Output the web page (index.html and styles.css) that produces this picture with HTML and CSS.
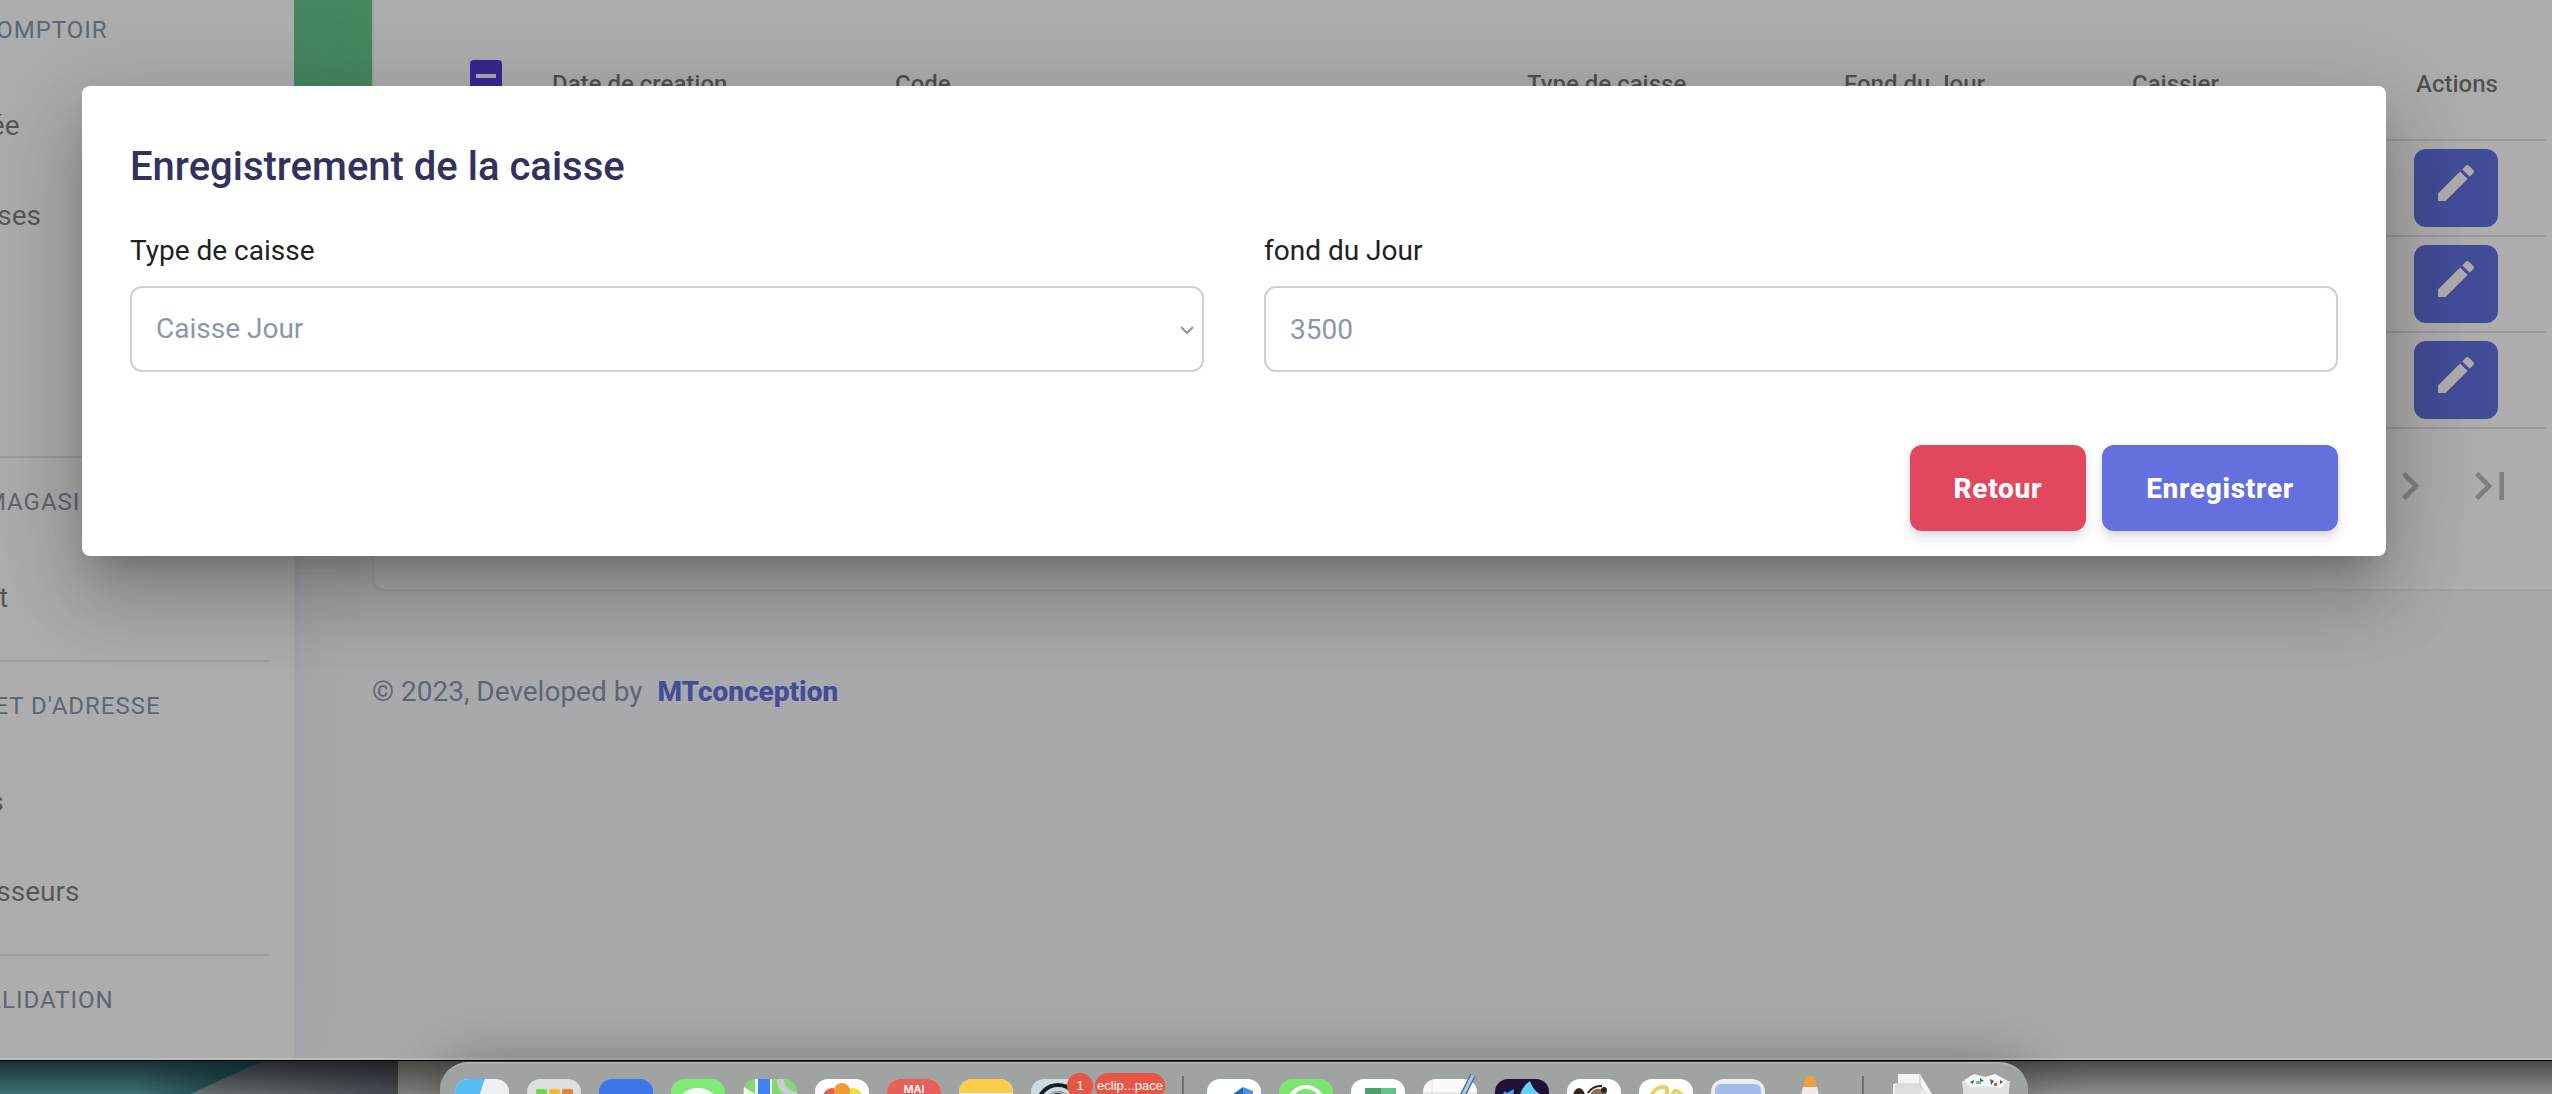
FILE: index.html
```
<!DOCTYPE html>
<html lang="fr">
<head>
    <meta charset="UTF-8">
    <title>Enregistrement de la caisse</title>
    <link rel="stylesheet" href="styles.css">
</head>
<body>
    <div class="page">
        <nav class="sidebar">
            <div class="group">
                <h6>Ventes et comptoir</h6>
                <a href="#">Journée</a>
                <a href="#">Dépenses</a>
                <a href="#">Vente</a>
                <a href="#">Stock</a>
            </div>
            <div class="group">
                <h6>Stocks du magasin</h6>
                <a href="#">Produit</a>
            </div>
            <div class="group">
                <h6>Personnes et d'adresse</h6>
                <a href="#">Clients</a>
                <a href="#">Fournisseurs</a>
            </div>
            <div class="group">
                <h6>Gestions validation</h6>
            </div>
        </nav>

        <main class="main">
            <div class="header"></div>
            <div class="card">
                <table class="list">
                    <colgroup>
                        <col class="c-check"><col class="c-date"><col><col class="c-type"><col class="c-fond"><col class="c-user"><col class="c-act">
                    </colgroup>
                    <thead>
                        <tr>
                            <th class="check"><input type="checkbox" aria-label="Tout"></th>
                            <th>Date de creation</th>
                            <th>Code</th>
                            <th>Type de caisse</th>
                            <th>Fond du Jour</th>
                            <th>Caissier</th>
                            <th>Actions</th>
                        </tr>
                    </thead>
                    <tbody>
                        <tr>
                            <td></td><td></td><td></td><td></td><td></td><td></td>
                            <td><button class="edit" aria-label="Modifier"><svg viewBox="0 0 24 24"><use href="#pencil"/></svg></button></td>
                        </tr>
                        <tr>
                            <td></td><td></td><td></td><td></td><td></td><td></td>
                            <td><button class="edit" aria-label="Modifier"><svg viewBox="0 0 24 24"><use href="#pencil"/></svg></button></td>
                        </tr>
                        <tr>
                            <td></td><td></td><td></td><td></td><td></td><td></td>
                            <td><button class="edit" aria-label="Modifier"><svg viewBox="0 0 24 24"><use href="#pencil"/></svg></button></td>
                        </tr>
                    </tbody>
                </table>
                <div class="paginator">
                    <button aria-label="Page suivante"><svg viewBox="0 0 24 24"><path d="M10 6L8.59 7.41 13.17 12l-4.58 4.59L10 18l6-6z"/></svg></button>
                    <button aria-label="Dernière page"><svg viewBox="0 0 24 24"><path d="M5.59 7.41L10.18 12l-4.59 4.59L7 18l6-6-6-6zM16 6h2v12h-2z"/></svg></button>
                </div>
            </div>
            <footer class="footer">© 2023, Developed by <a href="#">MTconception</a></footer>
        </main>

        <div class="overlay">
            <form class="dialog" role="dialog">
                <h2>Enregistrement de la caisse</h2>
                <div class="fields">
                    <div class="field">
                        <label for="type">Type de caisse</label>
                        <div class="select">
                            <select id="type"><option>Caisse Jour</option></select>
                            <svg viewBox="0 0 16 10"><path d="M2 2l6 6 6-6"/></svg>
                        </div>
                    </div>
                    <div class="field">
                        <label for="fond">fond du Jour</label>
                        <input type="text" id="fond" value="3500">
                    </div>
                </div>
                <div class="actions">
                    <button type="button" class="btn danger">Retour</button>
                    <button type="button" class="btn primary">Enregistrer</button>
                </div>
            </form>
        </div>
    </div>

    <div class="desktop">
        <svg class="wallpaper" width="440" height="34" viewBox="0 0 440 34">
            <defs>
                <linearGradient id="teal" x1="0" y1="0" x2="0" y2="1"><stop offset="0" stop-color="#1c2f31"/><stop offset="1" stop-color="#3d6f74"/></linearGradient>
                <linearGradient id="tealShade" x1="0" y1="0" x2="1" y2="0"><stop offset=".5" stop-color="#07282c" stop-opacity="0"/><stop offset="1" stop-color="#07282c" stop-opacity=".8"/></linearGradient>
                <linearGradient id="slate" x1="0" y1="0" x2="0" y2="1"><stop offset="0" stop-color="#26292c"/><stop offset="1" stop-color="#676d71"/></linearGradient>
                <linearGradient id="slateShade" x1="0" y1="0" x2="1" y2="0"><stop offset=".5" stop-color="#10141c" stop-opacity="0"/><stop offset="1" stop-color="#10141c" stop-opacity=".4"/></linearGradient>
                <linearGradient id="warm" x1="0" y1="0" x2="0" y2="1"><stop offset="0" stop-color="#474744"/><stop offset="1" stop-color="#82807c"/></linearGradient>
            </defs>
            <rect width="398" height="34" fill="url(#slate)"/>
            <rect width="398" height="34" fill="url(#slateShade)"/>
            <path d="M0 0H265L190 34H0z" fill="url(#teal)"/>
            <path d="M0 0H265L190 34H0z" fill="url(#tealShade)"/>
            <rect x="398" width="42" height="34" fill="url(#warm)"/>
        </svg>
        <div class="dock">
            <!-- finder -->
            <svg viewBox="0 0 54 54"><rect width="54" height="54" rx="13" fill="#eef0f3"/><path d="M13 0H30Q24 14 22 30H0V13A13 13 0 0 1 13 0z" fill="#55bdf5"/><path d="M14 16v8M40 16v8" stroke="#222" stroke-width="2"/></svg>
            <!-- launchpad -->
            <svg viewBox="0 0 54 54"><rect width="54" height="54" rx="13" fill="#dcdfe0"/><rect x="9" y="10" width="11" height="11" rx="2" fill="#69d94b"/><rect x="22" y="10" width="11" height="11" rx="2" fill="#f5b93a"/><rect x="35" y="10" width="11" height="11" rx="2" fill="#e58435"/></svg>
            <!-- mail -->
            <svg viewBox="0 0 54 54"><rect width="54" height="54" rx="13" fill="#3b76ea"/><rect x="8" y="15" width="38" height="26" rx="3" fill="#f3f6fb"/></svg>
            <!-- messages -->
            <svg viewBox="0 0 54 54"><rect width="54" height="54" rx="13" fill="#7fea78"/><ellipse cx="27" cy="25" rx="20" ry="16" fill="#f7fbf7"/></svg>
            <!-- maps -->
            <svg viewBox="0 0 54 54"><rect width="54" height="54" rx="13" fill="#83d876"/><path d="M1 8L12 15V30H0z" fill="#f6f8f6"/><path d="M12 0H29V30H12z" fill="#f2f4f5"/><path d="M15 0H27V30H15z" fill="#3f83f2"/><path d="M37 0Q38 14 54 17" fill="none" stroke="#c9ccd4" stroke-width="7"/></svg>
            <!-- photos -->
            <svg viewBox="0 0 54 54"><rect width="54" height="54" rx="13" fill="#fdfdfd"/><circle cx="17" cy="18" r="9" fill="#e9604f"/><circle cx="38" cy="18" r="9" fill="#f1df3e"/><circle cx="27" cy="12" r="8" fill="#f09a38"/></svg>
            <!-- calendar -->
            <svg viewBox="0 0 54 54"><rect width="54" height="54" rx="13" fill="#f4f4f4"/><path d="M0 17V13A13 13 0 0 1 13 0H41A13 13 0 0 1 54 13V17z" fill="#e6615a"/><text x="27" y="14" text-anchor="middle">MAI</text></svg>
            <!-- notes -->
            <svg viewBox="0 0 54 54"><rect width="54" height="54" rx="13" fill="#efeeec"/><path d="M0 14V13A13 13 0 0 1 13 0H41A13 13 0 0 1 54 13V14z" fill="#f8ce4b"/></svg>
            <!-- settings -->
            <div class="app">
                <svg viewBox="0 0 54 54"><rect width="54" height="54" rx="13" fill="#cddae0"/><circle cx="27" cy="26" r="20" fill="none" stroke="#1c1f21" stroke-width="4"/><circle cx="27" cy="26" r="14" fill="#3b3f42"/><path d="M16 18Q26 8 38 18" fill="none" stroke="#aab2b6" stroke-width="2"/></svg>
                <span class="badge">1</span>
            </div>
            <!-- eclipse -->
            <div class="app">
                <svg viewBox="0 0 54 54"><circle cx="27" cy="25" r="27" fill="#2c2250"/></svg>
                <span class="badge wide">eclip...pace</span>
            </div>
            <span class="sep"></span>
            <!-- vs code -->
            <svg viewBox="0 0 54 54"><rect width="54" height="54" rx="13" fill="#fff"/><path d="M22 18L36 8V20H22z" fill="#2765b0"/><path d="M36 8L46 12V20H36z" fill="#4195e8"/></svg>
            <!-- whatsapp -->
            <svg viewBox="0 0 54 54"><rect width="54" height="54" rx="13" fill="#7de472"/><circle cx="27" cy="25" r="17" fill="none" stroke="#fff" stroke-width="4"/></svg>
            <!-- sheets -->
            <svg viewBox="0 0 54 54"><rect width="54" height="54" rx="13" fill="#fff"/><path d="M14 9H30V20H14z" fill="#4c9f69"/><path d="M30 9H45V20H30z" fill="#65c188"/><path d="M5 17H24V30H5z" fill="#388354"/></svg>
            <!-- text edit -->
            <svg viewBox="0 0 54 54"><rect width="54" height="54" rx="13" fill="#fbfbfb"/><path d="M9 1V30" stroke="#f3d3d3" stroke-width="1"/><path d="M0 14H54" stroke="#d5d5d5"/><path d="M50 -4L38 20" stroke="#58708a" stroke-width="6"/><path d="M50 -4L38 20" stroke="#a9cbe9" stroke-width="3"/></svg>
            <!-- wolf -->
            <svg viewBox="0 0 54 54"><rect width="54" height="54" rx="13" fill="#1e1238"/><path d="M4 20L10 12 12 14 19 10 18 20z" fill="#42a7ec"/><path d="M24 20Q26 8 35 2Q38 12 47 16L44 20z" fill="#64d1f8"/><circle cx="29" cy="22" r="7" fill="#1c60c4"/></svg>
            <!-- beaver -->
            <svg viewBox="0 0 54 54"><rect width="54" height="54" rx="13" fill="#fff"/><ellipse cx="12" cy="18" rx="6" ry="9" fill="#34261f"/><path d="M22 20Q24 8 34 10Q42 12 40 20z" fill="#8b6e58"/><path d="M21 14Q26 6 35 7" fill="none" stroke="#2d2420" stroke-width="2"/><circle cx="37" cy="11" r="3" fill="#2d2420"/></svg>
            <!-- loops -->
            <svg viewBox="0 0 54 54"><rect width="54" height="54" rx="13" fill="#fff"/><path d="M10 20Q16 8 24 8T25 22M33 20Q34 4 46 20" fill="none" stroke="#ebcf62" stroke-width="4"/></svg>
            <!-- preview window -->
            <svg viewBox="0 0 54 54"><rect width="54" height="54" rx="13" fill="#ebedef"/><rect x="4" y="5" width="46" height="44" rx="6" fill="#a2bbea"/></svg>
            <!-- vlc -->
            <svg viewBox="0 0 54 54"><path d="M20 8H34L40 34H14z" fill="#ececec"/><path d="M23 -3H31L34 8H20z" fill="#f0a03a"/></svg>
            <span class="sep"></span>
            <!-- documents -->
            <svg viewBox="0 0 54 54"><path d="M6 5H11V-5H33L48 20V30H6z" fill="#f3f3f3"/><path d="M8 4H34V30H8z" fill="#dcdddd"/><path d="M33 -5V6L41 20" fill="none" stroke="#c3c5c5"/></svg>
            <!-- trash -->
            <svg viewBox="0 0 54 54"><path d="M3 2H51L46 50H8z" fill="#dfe1e1"/><path d="M5 1L15 -5 26 -2 36 -5 49 2 42 9 27 7 12 9z" fill="#f5f5f5"/><path d="M11 3L15 1 14 5zM21 -1L25 2 21 3zM31 0L35 2 32 6zM41 1L44 3 41 5z" fill="#5b5a5b"/><path d="M17 2h5v3h-5z" fill="#55bfc0"/><path d="M35 4h3v3h-3z" fill="#b96d3f"/></svg>
        </div>
    </div>

    <svg class="defs">
        <path id="pencil" d="M3 17.25V21h3.75L17.81 9.94l-3.75-3.75L3 17.25zM20.71 7.04a1 1 0 0 0 0-1.41l-2.34-2.34a1 1 0 0 0-1.41 0l-1.83 1.83 3.75 3.75 1.83-1.83z"/>
    </svg>
</body>
</html>
```
FILE: styles.css
```
* {margin: 0;padding: 0;box-sizing: border-box;}

body{
    display: flex;
    flex-direction: column;
    height: 100vh;
    overflow: hidden;
    font-family: Roboto, "Open Sans", sans-serif;
    font-size: 28px;
    line-height: 42px;
    color: #8898aa;
    background-color: #f8f9fe;
}
a{
    text-decoration: none;
}
button{
    border: 0;
    font-family: inherit;
}
.defs{
    position: absolute;
    width: 0;
    height: 0;
}

/* page */
.page{
    position: relative;
    display: flex;
    flex: 1;
    min-height: 0;
    overflow: hidden;
}
.sidebar{
    flex: none;
    width: 500px;
    margin-left: -206px;
    padding: 0 25px 0 48px;
    background-color: #fff;
    box-shadow: 0 0 64px rgba(136,152,170,.15);
    z-index: 1;
}
.group{
    padding: 26px 0 18px;
    border-bottom: 2px solid #e6e6e6;
}
.group:first-child{
    padding: 12px 0 16px;
}
.group:last-child{
    border-bottom: 0;
}
.group h6{
    height: 36px;
    margin-bottom: 32px;
    font-size: 24px;
    font-weight: 400;
    line-height: 36px;
    text-transform: uppercase;
    letter-spacing: 1px;
    white-space: nowrap;
}
.group a{
    display: block;
    height: 90px;
    padding-left: 76px;
    line-height: 92px;
    color: rgba(0,0,0,.5);
}
.main{
    flex: 1;
    min-width: 0;
}
.header{
    height: 400px;
    background-color: #67c98e;
}
.card{
    margin: -400px 0 0 78px;
    padding: 29px 6px 46px 48px;
    background-color: #fff;
    border: 2px solid #f0f0f0;
    border-top: 0;
    border-right: 0;
    border-radius: 0 0 0 12px;
}
.list{
    width: 100%;
    table-layout: fixed;
    border-spacing: 0;
}
.c-check{width: 130px;}
.c-date{width: 343px;}
.c-type{width: 317px;}
.c-fond{width: 288px;}
.c-user{width: 282px;}
.c-act{width: 132px;}
.list th{
    height: 112px;
    border-bottom: 2px solid #e0e0e0;
    font-size: 24px;
    font-weight: 500;
    text-align: left;
    color: rgba(0,0,0,.54);
}
.list td{
    height: 96px;
    border-bottom: 2px solid #e0e0e0;
}
.list th:last-child{
    padding-left: 2px;
}
.list .check{
    padding: 31px 0 0 48px;
    vertical-align: top;
}
.check input{
    display: block;
    width: 32px;
    height: 32px;
    appearance: none;
    border-radius: 4px;
    background: linear-gradient(#fff,#fff) center/20px 4px no-repeat #5538d6;
}
.edit{
    display: block;
    width: 84px;
    height: 78px;
    padding-bottom: 10px;
    border-radius: 12px;
    background-color: #6370de;
}
.edit svg{
    display: block;
    width: 48px;
    height: 48px;
    margin: 0 auto;
    fill: #fff;
}
.paginator{
    display: flex;
    justify-content: flex-end;
    align-items: center;
    height: 114px;
    padding-right: 16px;
}
.paginator button{
    width: 80px;
    height: 80px;
    background: none;
}
.paginator svg{
    display: block;
    width: 56px;
    margin: 0 auto;
    fill: #bdbdbd;
}
.footer{
    padding: 80px 78px;
}
.footer a{
    margin-left: 8px;
    font-weight: 800;
    color: #6370de;
}

/* dialog */
.overlay{
    position: absolute;
    top: 0;
    right: 0;
    bottom: 0;
    left: 0;
    z-index: 2;
    padding: 86px 166px 0 82px;
    background-color: rgba(0,0,0,.32);
}
.dialog{
    padding: 57px 48px 25px;
    border-radius: 8px;
    background-color: #fff;
    box-shadow: 0 22px 30px -14px rgba(0,0,0,.2), 0 48px 76px 6px rgba(0,0,0,.14), 0 18px 92px 16px rgba(0,0,0,.12);
}
.dialog h2{
    margin-bottom: 39px;
    font-size: 40px;
    font-weight: 500;
    line-height: 48px;
    color: #32325d;
}
.fields{
    display: grid;
    grid-template-columns: 1fr 1fr;
    gap: 60px;
}
.field label{
    display: block;
    margin-bottom: 14px;
    color: #212121;
}
.field select,
.field input{
    display: block;
    width: 100%;
    height: 86px;
    padding: 0 24px;
    appearance: none;
    border: 2px solid #cad1d7;
    border-radius: 12px;
    background-color: #fff;
    font: inherit;
    color: #8898aa;
}
.select{
    position: relative;
}
.select svg{
    position: absolute;
    top: 39px;
    right: 9px;
    width: 16px;
    height: 10px;
    fill: none;
    stroke: #8898aa;
    stroke-width: 2;
}
.actions{
    display: flex;
    justify-content: flex-end;
    gap: 16px;
    margin-top: 73px;
}
.btn{
    height: 86px;
    padding: 0 44px;
    border-radius: 12px;
    font-size: 28px;
    font-weight: 800;
    letter-spacing: .025em;
    color: #fff;
    box-shadow: 0 8px 12px rgba(50,50,93,.11), 0 2px 6px rgba(0,0,0,.08);
}
.danger{
    background-color: #e14860;
}
.primary{
    background-color: #6370de;
}

/* dock */
.desktop{
    position: relative;
    z-index: 3;
    flex: none;
    height: 36px;
    padding-left: 440px;
    border-top: 2px solid #b9bdbc;
    background: linear-gradient(#474747,#8c8c8c);
}
.wallpaper{
    position: absolute;
    top: 0;
    left: 0;
}
.desktop::after{
    content: "";
    position: absolute;
    top: 0;
    left: 0;
    right: 0;
    height: 1px;
    background-color: #000;
}
.dock{
    position: relative;
    display: flex;
    gap: 18px;
    width: 1588px;
    height: 80px;
    margin-top: 2px;
    padding: 15px 15px 0;
    border-top: 2px solid #abb0ae;
    border-radius: 28px;
    background-color: #9fa3a1;
    box-shadow: 0 0 60px rgba(0,0,0,.3);
}
.dock svg{
    display: block;
    flex: none;
    width: 54px;
    height: 54px;
    overflow: visible;
}
.dock text{
    font-family: Inter, sans-serif;
    font-size: 11px;
    font-weight: 600;
    fill: #fff;
}
.app{
    position: relative;
    width: 54px;
}
.badge{
    position: absolute;
    top: -6px;
    right: -8px;
    width: 26px;
    height: 26px;
    border-radius: 13px;
    background-color: #e85545;
    font-family: "Liberation Sans", sans-serif;
    font-size: 13px;
    line-height: 26px;
    text-align: center;
    color: #fff;
}
.wide{
    width: 70px;
}
.sep{
    width: 2px;
    height: 60px;
    margin: -3px 5px 0 7px;
    background-color: #6c6f6e;
}
```
